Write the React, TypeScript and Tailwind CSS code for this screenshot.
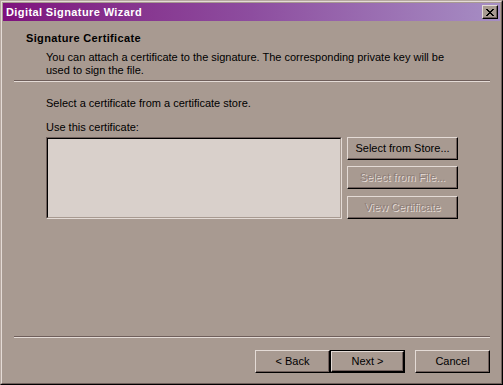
import React from "react";

function Btn({
  children,
  disabled,
  isDefault,
  className = "",
}: {
  children: React.ReactNode;
  disabled?: boolean;
  isDefault?: boolean;
  className?: string;
}) {
  const inner = (
    <div
      className={
        "flex h-full w-full items-center justify-center border-t border-l border-r border-b border-t-[#e4dbd6] border-l-[#e4dbd6] border-r-black border-b-black shadow-[inset_-1px_-1px_0_#6f5f5b] " +
        (disabled
          ? "text-[#8e7f79] [text-shadow:1px_1px_0_#e6ddd8]"
          : "text-black")
      }
    >
      {children}
    </div>
  );
  if (isDefault) {
    return (
      <div className={"h-[23px] w-[75px] border border-black " + className}>
        {inner}
      </div>
    );
  }
  return <div className={"h-[23px] " + className}>{inner}</div>;
}

export default function App() {
  return (
    <div className="h-[385px] w-[503px] font-['Liberation_Sans',Arial,sans-serif] text-[11px] leading-[13px] text-black">
      <div className="flex h-full w-full flex-col border border-t-[#b6a8a0] border-l-[#b6a8a0] border-r-black border-b-black bg-[#a89a91]">
        <div className="flex h-full w-full flex-col border border-t-[#e4dbd6] border-l-[#e4dbd6] border-r-[#6f5f5b] border-b-[#6f5f5b] p-px">
          {/* Title bar */}
          <div className="flex h-[18px] items-center justify-between bg-gradient-to-r from-[#7e0f7d] via-[#8d4d9f] to-[#a68ec4] pl-[3px] pr-[2px]">
            <span className="font-bold tracking-[0.4px] text-white">
              Digital Signature Wizard
            </span>
            <div className="flex h-[14px] w-[16px] items-center justify-center border border-t-[#e4dbd6] border-l-[#e4dbd6] border-r-black border-b-black bg-[#a89a91] shadow-[inset_-1px_-1px_0_#6f5f5b]">
              <svg width="8" height="7" viewBox="0 0 8 7" shapeRendering="crispEdges">
                <path
                  d="M0 0h2v1H0zM6 0h2v1H6zM1 1h2v1H1zM5 1h2v1H5zM2 2h4v1H2zM3 3h2v1H3zM2 4h4v1H2zM1 5h2v1H1zM5 5h2v1H5zM0 6h2v1H0zM6 6h2v1H6z"
                  fill="#000"
                />
              </svg>
            </div>
          </div>

          {/* Header */}
          <div className="mt-[11px] pl-[23px] font-bold tracking-[0.35px]">
            Signature Certificate
          </div>
          <div className="mt-[6px] pl-[43px] pr-[40px]">
            You can attach a certificate to the signature. The corresponding
            private key will be used to sign the file.
          </div>
          <div className="mt-[3px] ml-[11px] mr-[10px] h-[2px] border-t border-b border-t-[#6f5f5b] border-b-[#e4dbd6]" />

          {/* Body */}
          <div className="mt-[15px] pl-[43px]">
            Select a certificate from a certificate store.
          </div>
          <div className="mt-[11px] pl-[43px]">Use this certificate:</div>
          <div className="mt-[3px] flex pl-[43px]">
            <div className="h-[82px] w-[296px] border border-t-[#6f5f5b] border-l-[#6f5f5b] border-r-[#e4dbd6] border-b-[#e4dbd6]">
              <div className="h-full w-full border border-t-black border-l-black border-r-[#a89a91] border-b-[#a89a91] bg-[#d9d0cb]" />
            </div>
            <div className="ml-[5px] flex w-[111px] flex-col">
              <Btn>Select from Store...</Btn>
              <Btn disabled className="mt-[6px]">
                Select from File...
              </Btn>
              <Btn disabled className="mt-[7px]">
                View Certificate
              </Btn>
            </div>
          </div>

          <div className="flex-1" />

          {/* Footer */}
          <div className="ml-[11px] mr-[10px] h-[2px] border-t border-b border-t-[#6f5f5b] border-b-[#e4dbd6]" />
          <div className="mt-[12px] mb-[9px] flex justify-end pr-[10px]">
            <Btn className="w-[75px]">&lt; Back</Btn>
            <Btn isDefault>Next &gt;</Btn>
            <Btn className="ml-[10px] w-[75px]">Cancel</Btn>
          </div>
        </div>
      </div>
    </div>
  );
}
